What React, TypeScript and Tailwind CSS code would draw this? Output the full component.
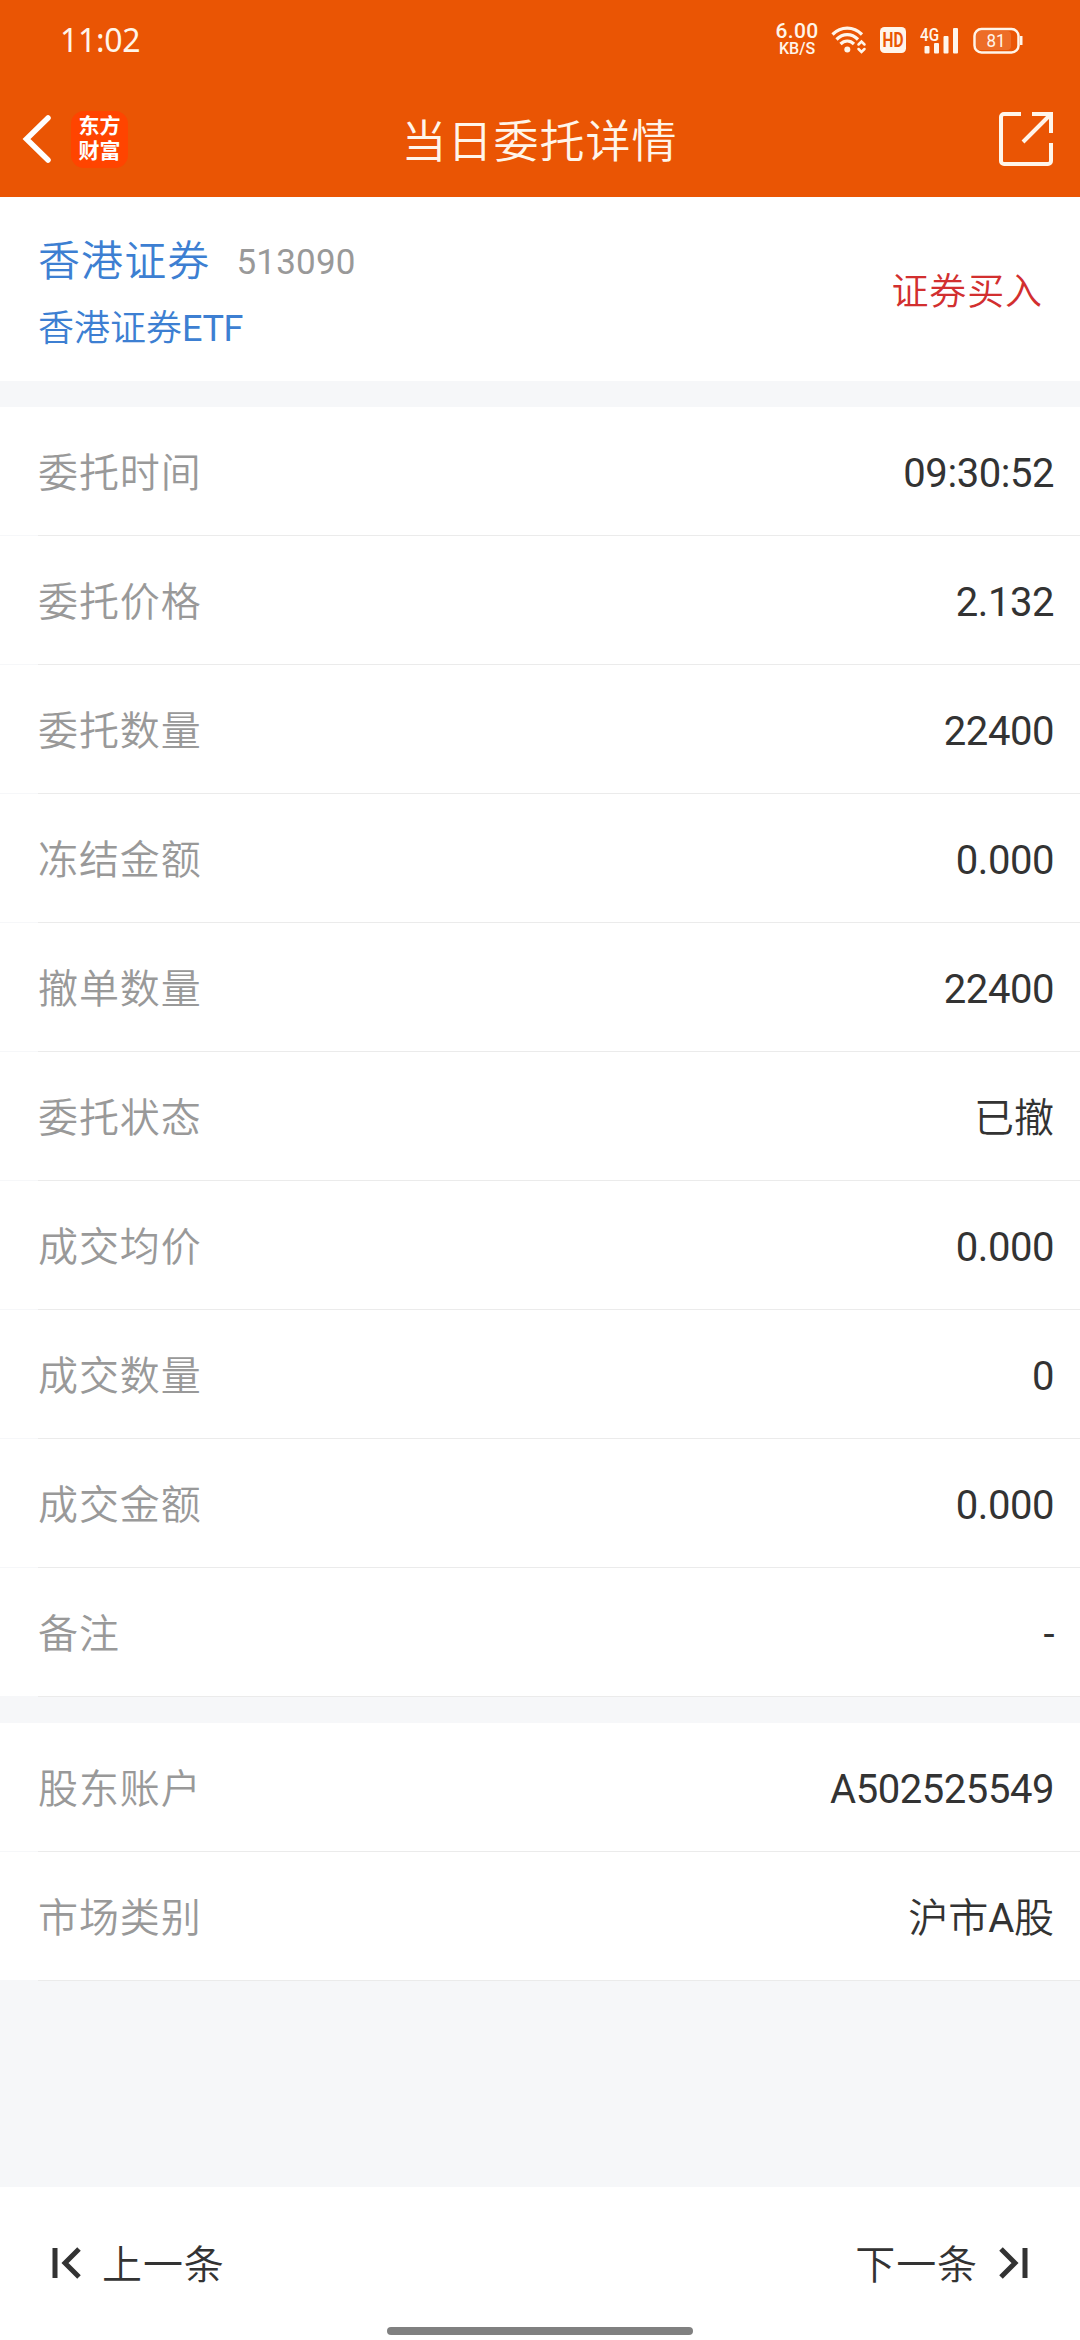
import React from "react";

type Row = {
  label: string;
  value: string;
};

const ORDER_ROWS: Row[] = [
  { label: "委托时间", value: "09:30:52" },
  { label: "委托价格", value: "2.132" },
  { label: "委托数量", value: "22400" },
  { label: "冻结金额", value: "0.000" },
  { label: "撤单数量", value: "22400" },
  { label: "委托状态", value: "已撤" },
  { label: "成交均价", value: "0.000" },
  { label: "成交数量", value: "0" },
  { label: "成交金额", value: "0.000" },
  { label: "备注", value: "-" },
];

const ACCOUNT_ROWS: Row[] = [
  { label: "股东账户", value: "A502525549" },
  { label: "市场类别", value: "沪市A股" },
];

const WifiIcon = () => (
  <svg width="36" height="28" viewBox="0 0 36 28" fill="none" stroke="currentColor" strokeWidth="3.200">
    <path d="M1.5 8.500C10 0 22.500 0 31 8.500" />
    <path d="M5.500 13.500C12 7 20.500 7 27 13.500" />
    <path d="M9.500 18C13.500 14 19 14 23 18" />
    <circle cx="16.300" cy="23.500" r="3" fill="currentColor" stroke="none" />
    <path d="M27.500 18.500l3-3 3 3M27.500 23l3 3 3-3" strokeWidth="2.500" strokeLinecap="round" />
  </svg>
);

const HdIcon = () => (
  <svg width="26" height="26" viewBox="0 0 26 26" className="overflow-visible">
    <rect width="26" height="26" rx="4.500" fill="#fff5ea" />
    <text x="2.500" y="20" fontSize="20" fontWeight="700" fill="#e95503" textLength="21" lengthAdjust="spacingAndGlyphs">HD</text>
  </svg>
);

const SignalIcon = () => (
  <svg width="39" height="34" viewBox="0 -7 39 34" fill="currentColor">
    <text x="0" y="14" fontSize="18" fontWeight="500" textLength="19" lengthAdjust="spacingAndGlyphs">4G</text>
    <rect x="4.500" y="19" width="5" height="7.500" rx="1" />
    <rect x="14" y="16" width="5" height="10.500" rx="1" />
    <rect x="23.500" y="9" width="5" height="17.500" rx="1" />
    <rect x="33" y="1" width="5" height="25.500" rx="1" />
  </svg>
);

const BatteryIcon = () => (
  <svg width="51" height="27" viewBox="0 0 51 27" fill="none">
    <rect x="3" y="4" width="35" height="19" rx="4" fill="#fff" fillOpacity="0.14" />
    <rect x="1.500" y="2" width="44" height="23.500" rx="7" stroke="currentColor" strokeWidth="2.500" />
    <path d="M47 9h2.500v9H47z" fill="currentColor" />
    <text x="23" y="20" fontSize="19" textAnchor="middle" textLength="19" lengthAdjust="spacingAndGlyphs" fill="currentColor">81</text>
  </svg>
);

const StatusBar = () => (
  <div className="flex h-20 items-center justify-between pr-[56px] pl-[60px] font-['Noto_Sans','Noto_Sans_CJK_SC',sans-serif]">
    <span className="text-[32px] leading-none tracking-[-0.300px]">11:02</span>
    <div className="flex h-7 items-center font-['Roboto',sans-serif]">
      <div className="flex w-[44px] flex-col items-center font-medium">
        <span className="text-[21px] leading-[17px] tracking-[0.300px]">6.00</span>
        <span className="text-[16px] leading-[18px]">KB/S</span>
      </div>
      <div className="ml-[12px]">
        <WifiIcon />
      </div>
      <div className="ml-[13px]">
        <HdIcon />
      </div>
      <div className="-mt-[7px] ml-[14px]">
        <SignalIcon />
      </div>
      <div className="ml-[14px]">
        <BatteryIcon />
      </div>
    </div>
  </div>
);

const Header = () => (
  <header className="h-[197px] bg-[#ea5504] text-[#fff5ea]">
    <StatusBar />
    <div className="flex h-[118px] items-center justify-between pr-[26px] pl-[22px]">
      <div className="flex flex-1 items-center">
        <svg width="30" height="50" viewBox="0 0 30 50" fill="none" stroke="#fff" strokeWidth="5.500">
          <path d="M26 4L4.500 25 26 46" strokeLinecap="round" />
        </svg>
        <div className="ml-[19px] flex h-[57px] w-[57px] flex-col items-center justify-center rounded-[13px] bg-[#ff4400] text-[21px] font-bold leading-[25px] text-white">
          <span>东方</span>
          <span>财富</span>
        </div>
      </div>
      <h1 className="pt-[7px] pl-[3px] text-[45px] font-[350] leading-none tracking-[1px]">当日委托详情</h1>
      <div className="flex flex-1 justify-end">
        <svg width="56" height="56" viewBox="0 0 56 56" fill="none" stroke="currentColor" strokeWidth="4">
          <path d="M23 3H6a3 3 0 0 0-3 3v44a3 3 0 0 0 3 3h44a3 3 0 0 0 3-3V32" />
          <path d="M34 3h19v19M53 3L25 31" />
        </svg>
      </div>
    </div>
  </header>
);

// Chinese glyphs are set lighter than the Latin ones next to them
const MixedText = ({ text }: { text: string }) => (
  <>
    {text.split(/([\u4e00-\u9fa5]+)/).filter(Boolean).map((part, i) => (
      <span
        key={i}
        className={/[\u4e00-\u9fa5]/.test(part) ? "font-[350]" : "font-normal tracking-[-0.450px]"}
      >
        {part}
      </span>
    ))}
  </>
);

const DetailRow = ({ label, value }: Row) => (
  <div className="flex h-[129px]">
    <div className="w-[38px] border-b border-[#f6f7f9]" />
    <div className="flex flex-1 items-center justify-between border-b border-[#ebebeb] pt-[6px] pr-[26px] text-[40px] leading-none">
      <span className="font-[350] tracking-[0.900px] text-[#999999]">{label}</span>
      <span className="text-[#333333]">
        <MixedText text={value} />
      </span>
    </div>
  </div>
);

const App: React.FC = () => {
  return (
    <div className="flex h-[2340px] w-[1080px] flex-col bg-[#f6f7f9] font-['Roboto','Noto_Sans_CJK_SC',sans-serif]">
      <Header />

      <section className="flex h-[184px] items-center justify-between bg-white pt-3 pr-[37px] pl-[38px]">
        <div className="flex flex-col text-[#3d7fd2]">
          <div className="flex items-center gap-[26px]">
            <span className="text-[42px] font-[350] leading-[60px] tracking-[1.100px]">香港证券</span>
            <span className="pt-0.5 text-[35px] leading-[60px] tracking-[0.200px] text-[#999999]">513090</span>
          </div>
          <span className="mt-1.5 text-[36px] leading-[60px]">
            <MixedText text="香港证券ETF" />
          </span>
        </div>
        <span className="-mt-1 text-[37px] font-[350] tracking-[0.900px] text-[#d22f2f]">证券买入</span>
      </section>

      <section className="mt-[26px] bg-white">
        {ORDER_ROWS.map((row) => (
          <DetailRow key={row.label} {...row} />
        ))}
      </section>

      <section className="mt-[26px] bg-white">
        {ACCOUNT_ROWS.map((row) => (
          <DetailRow key={row.label} {...row} />
        ))}
      </section>

      <footer className="mt-auto flex h-[153px] flex-col bg-white text-[40px] font-[350] text-[#333333]">
        <div className="flex h-[140px] items-center justify-between px-[50px] pt-3">
          <button className="flex items-center gap-[20px] tracking-[0.900px]">
            <svg width="32" height="32" viewBox="0 0 32 32" fill="none" stroke="currentColor" strokeWidth="5">
              <path d="M5 1v30M29 2L15 16l14 14" />
            </svg>
            <span className="pt-[5px]">上一条</span>
          </button>
          <button className="flex items-center gap-[20px] tracking-[0.900px]">
            <span className="pt-[5px]">下一条</span>
            <svg width="32" height="32" viewBox="0 0 32 32" fill="none" stroke="currentColor" strokeWidth="5">
              <path d="M27 1v30M3 2l14 14L3 30" />
            </svg>
          </button>
        </div>
        <div className="mx-auto h-2 w-[306px] shrink-0 rounded-full bg-[#808080]" />
      </footer>
    </div>
  );
};

export default App;
